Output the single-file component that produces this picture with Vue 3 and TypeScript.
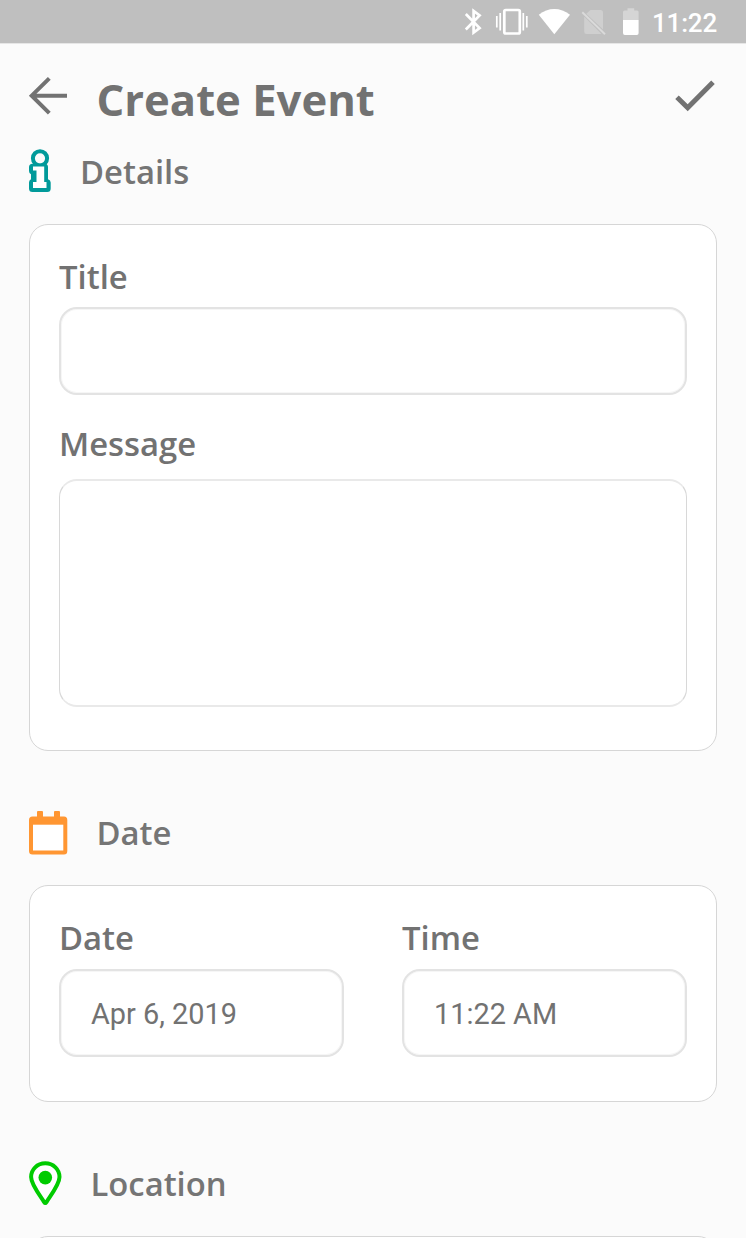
<script setup lang="ts">
import { ref } from 'vue'

const title = ref<string>('')
const message = ref<string>('')
const date = ref<string>('Apr 6, 2019')
const time = ref<string>('11:22 AM')
</script>

<template>
  <div class="screen">
    <div class="status">
      <svg class="status-icons" width="192" height="43" viewBox="0 0 192 43">
        <path d="M5.800 14L19.600 28L13.600 32.500V11L19.600 15.500L5.800 29.500" fill="none" stroke="#fff" stroke-width="2.700" />
        <g fill="none" stroke="#fff">
          <rect x="44.300" y="10" width="15.500" height="23.500" rx="1.500" stroke-width="2.700" />
          <path d="M36.800 16V27.500M40.200 13V30.500M63.300 13V30.500M66.800 16V27.500" stroke-width="1.700" />
        </g>
        <path d="M78.800 14.800Q86 9 94.300 9T110 14.800L94.300 34.200Z" fill="#fff" />
        <path d="M130.500 10H140.500Q143 10 143 12.500V29.500L126.300 13.800ZM124.200 16.500L141.500 34H126.500Q124.200 34 124.200 31.500Z" fill="#cfcfcf" />
        <path d="M122.300 12.300L145 34.300" fill="none" stroke="#dadada" stroke-width="1.900" />
        <path d="M163 20V12Q163 10.500 164.500 10.500H167.500V8.200H174.200V10.500H177Q178.600 10.500 178.600 12V20Z" fill="#d5d5d5" />
        <path d="M163 20H178.600V33Q178.600 35 176.800 35H164.800Q163 35 163 33Z" fill="#fff" />
      </svg>
      <span class="clock">11:22</span>
    </div>

    <header class="header">
      <svg class="back" width="40" height="40" viewBox="0 0 40 40">
        <path d="M21.300 2.300L3.700 19.700L21.300 37.100M3.700 19.700H39" fill="none" stroke="#727272" stroke-width="4" />
      </svg>
      <h1>Create Event</h1>
      <svg class="check" width="40" height="32" viewBox="0 0 40 32">
        <path d="M2 17.200L12.700 27.700L38 2.200" fill="none" stroke="#727272" stroke-width="5" />
      </svg>
    </header>

    <section class="details">
      <div class="heading">
        <svg width="24" height="44" viewBox="0 0 24 44">
          <circle cx="12" cy="9.300" r="7.100" fill="#fbfbfb" stroke="#019a9a" stroke-width="4" />
          <path d="M4.500 14.800H17Q20 15 20 18V30.300Q22.700 31 22.700 33.500V39.500Q22.700 43 19.300 43H4.500Q1 43 1 39.500V33.500Q1 31.300 3 30.200V25.200Q1 24.200 1 22V18Q1 15 4.500 14.800Z" fill="#019a9a" />
          <path d="M5 17.500H16.200V33H18.500V39H5V33H8.500V21.500H5Z" fill="#fff" />
        </svg>
        <h2>Details</h2>
      </div>
      <div class="card">
        <label for="title">Title</label>
        <input id="title" v-model="title" class="field">
        <label for="message" class="message-label">Message</label>
        <textarea id="message" v-model="message" class="area" />
      </div>
    </section>

    <section class="when">
      <div class="heading date">
        <svg width="39" height="44" viewBox="0 0 39 44">
          <path d="M3.500 5.500H8V1Q8 0 9 0H13Q14 0 14 1V5.500H25V1Q25 0 26 0H30Q31 0 31 1V5.500H35Q38.300 5.500 38.300 9V40Q38.300 43.500 35 43.500H3.500Q0 43.500 0 40V9Q0 5.500 3.500 5.500Z" fill="#ff9632" />
          <path d="M4 13.700H34.300V39.500H4Z" fill="#fff" />
        </svg>
        <h2>Date</h2>
      </div>
      <div class="card columns">
        <div class="column">
          <label for="date">Date</label>
          <input id="date" v-model="date" class="field">
        </div>
        <div class="column">
          <label for="time">Time</label>
          <input id="time" v-model="time" class="field">
        </div>
      </div>
    </section>

    <section class="where">
      <div class="heading location">
        <svg width="33" height="45" viewBox="0 0 33 45">
          <path d="M16.300 2.300C8.200 2.300 2.100 8.500 2.100 16C2.100 24 13 37 15.200 41.200Q16.300 43 17.400 41.200C19.600 37 30.500 24 30.500 16C30.500 8.500 24.400 2.300 16.300 2.300Z" fill="#fff" stroke="#00cb00" stroke-width="4" />
          <circle cx="16.300" cy="16.600" r="6.800" fill="#00cb00" />
        </svg>
        <h2>Location</h2>
      </div>
      <div class="card"></div>
    </section>
  </div>
</template>

<style>
body {
  margin: 0;
  overflow: hidden;
}
</style>

<style scoped>
* {
  box-sizing: border-box;
}
.screen {
  height: 1238px;
  overflow: hidden;
  background: #fbfbfb;
  color: #727272;
  font-family: "Open Sans", sans-serif;
}
svg {
  display: block;
  flex: none;
}
.status {
  display: flex;
  height: 43px;
  padding-left: 460px;
  background: #bfbfbf;
  box-shadow: 0 1px 0 #e6e6e6;
}
.clock {
  font: 500 26px/46px Roboto, sans-serif;
  letter-spacing: -0.2px;
  color: #fff;
}
.header {
  display: flex;
  height: 100px;
  padding: 0 31px 0 28px;
}
.back {
  margin-top: 33px;
}
.check {
  margin: 37px 0 0 auto;
}
h1 {
  margin: 24px 0 0 28.500px;
  font-size: 43.6px;
  line-height: 64px;
  font-weight: 700;
  white-space: nowrap;
}
section {
  padding: 0 29px;
}
.heading {
  display: flex;
  align-items: center;
  gap: 28.500px;
  height: 56px;
  margin-bottom: 25px;
}
.details .heading {
  gap: 28px;
}
.details .heading svg {
  margin-left: -1px;
}
h2,
label {
  display: block;
  margin: 0;
  font-size: 32.800px;
  line-height: 46px;
  font-weight: 600;
}
h2 {
  color: #757575;
}
.details h2 {
  padding-top: 2px;
}
.when,
.where {
  margin-top: 54px;
}
.when .heading,
.where .heading {
  margin-bottom: 24px;
}
.date svg {
  margin-top: -1px;
}
.location svg {
  margin-top: -2px;
}
.card {
  height: 527px;
  padding: 29px;
  border: 1px solid #d6d6d6;
  border-radius: 19px;
  background: #fff;
}
.field,
.area {
  display: block;
  width: 100%;
  margin: 0;
  border: 2px solid #e3e3e3;
  border-radius: 18px;
  background: #fff;
  outline: none;
  color: #727272;
  font: 400 28.900px/40px Roboto, sans-serif;
}
.field {
  height: 88px;
  margin-top: 7px;
  padding: 2px 30px 0;
  box-shadow: inset 0 0 0 1px #f6f6f6;
}
.message-label {
  margin-top: 26px;
}
.area {
  height: 228px;
  margin-top: 12px;
  padding: 20px 30px;
  border-width: 2px 1px;
  border-color: #e9e9e9 #d8d8d8;
  resize: none;
}
.columns {
  display: grid;
  grid-template-columns: 1fr 1fr;
  column-gap: 58px;
  height: 217px;
}
.columns .field {
  margin-top: 8px;
}
</style>
